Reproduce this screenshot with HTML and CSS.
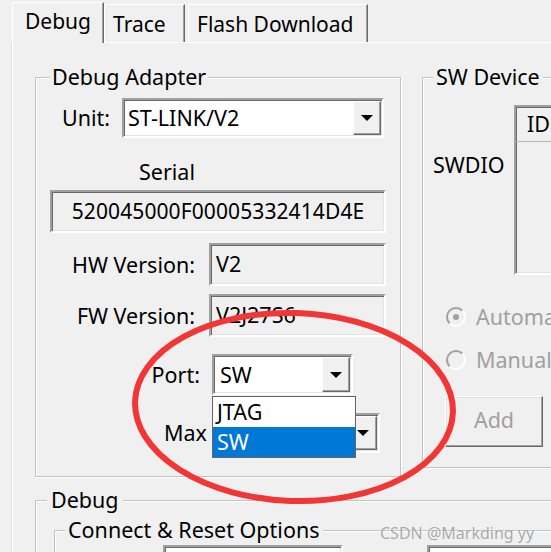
FILE: index.html
```html
<!DOCTYPE html>
<html>
<head>
<meta charset="utf-8">
<link rel="stylesheet" href="styles.css">
</head>
<body>
<div class="window">
  <div class="tabbar">
    <div class="tab tab-debug active">Debug</div>
    <div class="tab tab-trace">Trace</div>
    <div class="tab tab-flash">Flash Download</div>
  </div>
  <div class="panel">
    <div class="top-row">
      <fieldset class="group adapter">
        <legend>Debug Adapter</legend>
        <div class="row r-unit">
          <span class="lbl l-unit">Unit:</span>
          <div class="combo c-unit"><span class="ctext">ST-LINK/V2</span><span class="dbtn"><i class="arrow"></i></span></div>
        </div>
        <div class="serial-title">Serial</div>
        <div class="field f-serial">520045000F00005332414D4E</div>
        <div class="row r-hw">
          <span class="lbl l-ver">HW Version:</span>
          <div class="field f-ver">V2</div>
        </div>
        <div class="row r-fw">
          <span class="lbl l-ver">FW Version:</span>
          <div class="field f-ver">V2J27S6</div>
        </div>
        <div class="row r-port">
          <span class="lbl l-port">Port:</span>
          <div class="combo c-port"><span class="ctext">SW</span><span class="dbtn"><i class="arrow"></i></span>
            <div class="droplist">
              <div class="opt">JTAG</div>
              <div class="opt sel">SW</div>
            </div>
          </div>
        </div>
        <div class="row r-max">
          <span class="lbl l-max">Max</span>
          <div class="combo c-max"><span class="ctext"></span><span class="dbtn"><i class="arrow"></i></span></div>
        </div>
      </fieldset>
      <fieldset class="group swdev">
        <legend>SW Device</legend>
        <div class="sw-row">
          <span class="swdio">SWDIO</span>
          <div class="listbox">
            <div class="lb-head">IDCODE</div>
          </div>
        </div>
        <div class="radio r-auto"><span class="circle checked"></span><span>Automatic Detection</span></div>
        <div class="radio r-manual"><span class="circle"></span><span>Manual Configuration</span></div>
        <div class="btn-add">Add</div>
      </fieldset>
    </div>
    <fieldset class="group debug">
      <legend>Debug</legend>
      <fieldset class="group connect">
        <legend>Connect &amp; Reset Options</legend>
        <div class="conn-row">
          <div class="cbox cb1"></div>
          <div class="cbox cb2"></div>
        </div>
      </fieldset>
    </fieldset>
  </div>
  <svg class="annot" width="551" height="552" viewBox="0 0 551 552">
    <ellipse cx="294" cy="407" rx="159" ry="94" transform="rotate(2 294 407)" fill="none" stroke="#f23535" stroke-width="6"/>
  </svg>
  <div class="watermark">CSDN @Markding yy</div>
</div>
</body>
</html>
```

FILE: styles.css
```css
* { box-sizing: border-box; }
html, body { margin: 0; padding: 0; }
body {
  background: #f0f0f0;
  font-family: "Noto Sans", "Open Sans", sans-serif;
  font-size: 21.5px;
  line-height: 24px;
  color: #000;
}
.window {
  position: relative;
  width: 551px;
  height: 552px;
  overflow: hidden;
}

/* tabs */
.tabbar {
  display: flex;
  align-items: flex-end;
  height: 42px;
  padding-left: 12px;
}
.tab {
  flex: none;
  font-size: 21px;
  border-top: 1px solid #fff;
  border-left: 1px solid #fff;
  border-right: 1px solid #696969;
  box-shadow: inset -1px 0 0 #a0a0a0;
  background: #f0f0f0;
}
.tab-debug {
  width: 92px;
  height: 41px;
  margin-bottom: -1px;
  padding: 6px 0 0 12px;
  position: relative;
  z-index: 1;
}
.tab-trace {
  width: 81px;
  height: 38px;
  padding: 7px 0 0 8px;
}
.tab-flash {
  width: 180px;
  height: 38px;
  margin-left: 3px;
  padding: 7px 0 0 8px;
}

.panel {
  width: 640px;
  height: 520px;
  margin-left: 12px;
  border-top: 1px solid #fff;
  border-left: 1px solid #fff;
  box-shadow: -1px 0 0 #e3e3e3;
  padding: 22px 0 0 22px;
}
.top-row {
  display: flex;
  align-items: flex-start;
  gap: 21px;
}

/* group boxes */
.group {
  margin: 0;
  min-width: 0;
  border: 1px solid #c3c3c3;
  box-shadow: inset 1px 1px 0 #fff, 1px 1px 0 #fff;
}
.group > legend {
  background: #f0f0f0;
  line-height: 24px;
  padding: 0 2px;
}

.adapter {
  flex: none;
  width: 366px;
  padding: 0 14px 23px 14px;
}
.row {
  display: flex;
  align-items: center;
}
.lbl {
  flex: none;
  text-align: right;
  white-space: nowrap;
}
.r-unit { margin-top: 9px; }
.l-unit { width: 60px; margin-right: 12px; }
.serial-title {
  margin-top: 22px;
  padding-left: 89px;
}
.r-hw { margin-top: 10px; }
.r-fw { margin-top: 8px; }
.l-ver { width: 145px; margin-right: 14px; }
.r-port { margin-top: 17px; }
.l-port { width: 150px; margin-right: 12px; }
.r-max { margin-top: 18px; }
.l-max { width: 162px; text-align: left; padding-left: 114px; }

/* sunken controls */
.combo, .field, .listbox, .cbox {
  border: 2px solid;
  border-color: #a0a0a0 #fff #fff #a0a0a0;
  box-shadow: inset 1px 1px 0 #696969, inset -1px -1px 0 #e3e3e3;
}
.combo {
  display: flex;
  background: #fff;
  position: relative;
  flex: none;
}
.ctext {
  flex: 1;
  align-self: center;
  padding-left: 4px;
  white-space: nowrap;
}
.dbtn {
  flex: none;
  width: 28px;
  margin: 1px 1px 1px 0;
  background: #f0f0f0;
  border: 1px solid;
  border-color: #fff #696969 #696969 #fff;
  box-shadow: inset -1px -1px 0 #a0a0a0;
  display: flex;
  align-items: center;
  justify-content: center;
}
.arrow {
  width: 0;
  height: 0;
  border-left: 6px solid transparent;
  border-right: 6px solid transparent;
  border-top: 6px solid #000;
}
.c-unit { width: 262px; height: 40px; }
.c-port { width: 141px; height: 41px; }
.c-port .ctext { padding-left: 6px; }
.c-max { width: 168px; height: 40px; }

.field {
  background: #f0f0f0;
  height: 43px;
  line-height: 38px;
  white-space: nowrap;
}
.f-serial {
  margin-top: 6px;
  text-align: center;
  font-size: 21px;
  letter-spacing: 0.1px;
}
.f-ver {
  flex: none;
  width: 177px;
  padding-left: 5px;
}

/* dropdown list overlay */
.droplist {
  position: absolute;
  left: -2px;
  top: calc(100% + 3px);
  width: 144px;
  border: 1px solid #646464;
  background: #fff;
  z-index: 5;
}
.opt {
  height: 30px;
  line-height: 30px;
  padding-left: 4px;
}
.opt.sel {
  background: #0078d7;
  color: #fff;
}

/* SW device */
.swdev {
  flex: none;
  width: 220px;
  padding: 0 0 20px 10px;
}
.swdev > legend { padding: 0 3px; }
.sw-row {
  display: flex;
  align-items: flex-start;
  margin-top: 16px;
}
.swdio {
  flex: none;
  width: 81px;
  margin-top: 48px;
}
.listbox {
  flex: none;
  width: 160px;
  height: 170px;
  background: #f0f0f0;
}
.lb-head {
  height: 35px;
  line-height: 34px;
  padding-left: 11px;
  border-bottom: 1px solid #b5b5b5;
  white-space: nowrap;
}
.radio {
  display: flex;
  align-items: center;
  gap: 10px;
  margin-left: 13px;
  color: #a0a0a0;
  white-space: nowrap;
}
.r-auto { margin-top: 30px; }
.r-manual { margin-top: 19px; }
.circle {
  flex: none;
  width: 20px;
  height: 20px;
  border-radius: 50%;
  border: 2px solid;
  border-color: #a0a0a0 #fff #fff #a0a0a0;
  background: #f0f0f0;
  display: flex;
  align-items: center;
  justify-content: center;
}
.circle.checked::after {
  content: "";
  width: 6px;
  height: 6px;
  border-radius: 50%;
  background: #a0a0a0;
}
.btn-add {
  margin: 24px 0 0 12px;
  width: 98px;
  height: 51px;
  line-height: 46px;
  text-align: center;
  color: #a0a0a0;
  border: 1px solid;
  border-color: #fff #696969 #696969 #fff;
  box-shadow: inset -1px -1px 0 #a0a0a0, inset 1px 1px 0 #e3e3e3;
}

/* Debug group */
.debug {
  margin-top: 11px;
  padding: 0 0 0 11px;
  height: 200px;
}
.debug > legend { padding: 0 4px; }
.connect {
  margin: 6px 0 0 7px;
  padding: 0 0 0 10px;
  height: 100px;
}
.connect > legend { padding: 0 3px; }
.conn-row {
  display: flex;
  margin-top: 3px;
}
.cbox {
  flex: none;
  height: 30px;
  background: #fff;
}
.cb1 { width: 180px; margin-left: 98px; }
.cb2 { width: 160px; margin-left: 84px; }

/* annotation overlay */
.annot {
  position: absolute;
  left: 0;
  top: 0;
  pointer-events: none;
  z-index: 10;
}
.watermark {
  position: absolute;
  left: 380px;
  top: 523px;
  font-size: 16px;
  line-height: 20px;
  color: rgba(110, 110, 110, 0.6);
  text-shadow: 0 0 1px #fff;
  white-space: nowrap;
  z-index: 11;
}
```
